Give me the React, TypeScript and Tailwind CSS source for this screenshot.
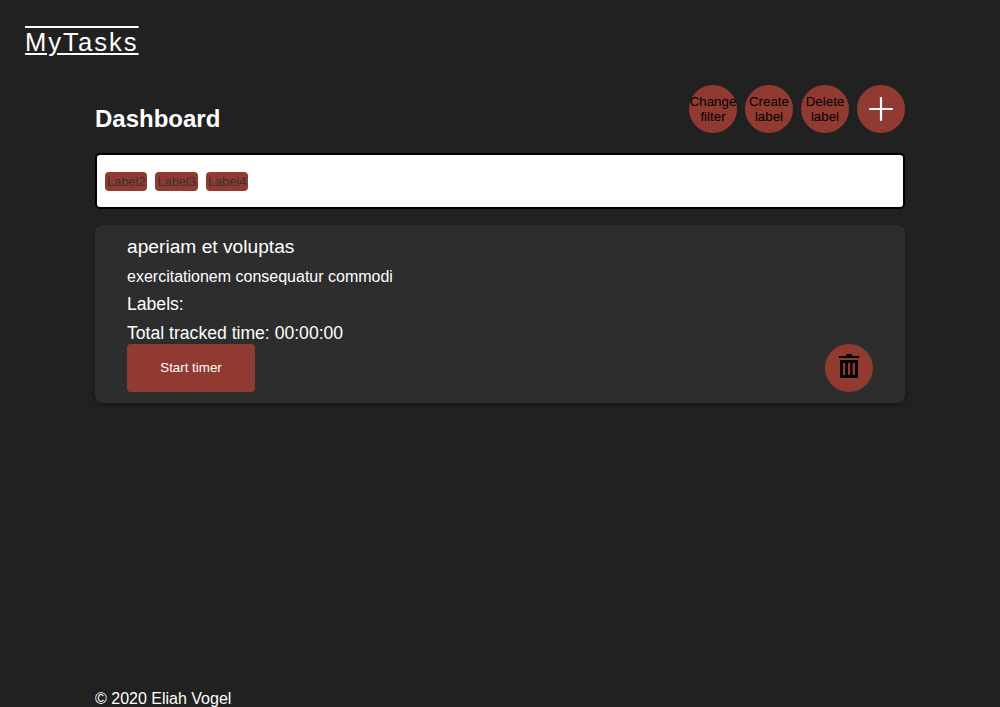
const roundButton =
  "flex h-12 w-12 shrink-0 items-center justify-center rounded-full bg-[#913a31] text-center text-[13.3333px] leading-[15px] text-black";

const actions = ["Change filter", "Create label", "Delete label"];
const labels = ["Label2", "Label3", "Label4"];

function PlusIcon() {
  return (
    <svg width="24" height="24" viewBox="0 0 24 24" fill="#fff">
      <path d="M10.9 0.2h2.2V10.9h10.7v2.2H13.1v10.7h-2.2V13.1H0.2v-2.2h10.7z" />
    </svg>
  );
}

function TrashIcon() {
  return (
    <svg width="20" height="24" viewBox="0 0 20 24" fill="#000">
      <path d="M7 1q0-1 1-1h4q1 0 1 1v1h7v2H0V2h7z" />
      <path
        fillRule="evenodd"
        d="M1 6h18v18H1zM4 9v12h2.3V9zM8.9 9v12h2.2V9zM13.7 9v12H16V9z"
      />
    </svg>
  );
}

export default function App() {
  return (
    <div className="flex h-[707px] flex-col overflow-hidden bg-[#212121] font-['Liberation_Sans',Arial,sans-serif] text-white">
      <header className="h-[85px] pt-[27px] pl-[25px]">
        <a className="block w-fit text-[25.6px] leading-[30px] tracking-[2px] decoration-2 underline-offset-2 [text-decoration-line:underline_overline]">
          MyTasks
        </a>
      </header>
      <main className="mx-auto flex w-[810px] flex-1 flex-col">
        <div className="flex h-12 justify-between">
          <h1 className="pt-5 text-2xl leading-7 font-bold">Dashboard</h1>
          <div className="flex gap-2">
            {actions.map((action) => (
              <button key={action} className={roundButton}>
                <span className="w-12">{action}</span>
              </button>
            ))}
            <button className={roundButton} aria-label="Add task">
              <PlusIcon />
            </button>
          </div>
        </div>
        <div className="mt-5 flex h-14 items-center gap-2 rounded-[5px] border-2 border-black bg-white px-2">
          {labels.map((label) => (
            <span
              key={label}
              className="rounded-[4px] bg-[#913a31] px-0.5 text-[12.8px] leading-[19px] text-[#333]"
            >
              {label}
            </span>
          ))}
        </div>
        <section className="mt-4 h-[178px] rounded-lg bg-[#2d2d2d] px-8 pt-[10px] shadow-[0_2px_4px_rgba(0,0,0,0.3)]">
          <h2 className="h-[30px] text-[19.2px] leading-6">aperiam et voluptas</h2>
          <p className="h-[27px] text-base leading-6">exercitationem consequatur commodi</p>
          <p className="h-[29px] text-[17.6px] leading-6">Labels:</p>
          <p className="h-[23px] text-[17.6px] leading-6">Total tracked time: 00:00:00</p>
          <div className="flex justify-between">
            <button className="h-12 w-32 rounded bg-[#913a31] text-[13.3333px] text-white">
              Start timer
            </button>
            <button className={roundButton} aria-label="Delete task">
              <span className="pb-1">
                <TrashIcon />
              </span>
            </button>
          </div>
        </section>
        <footer className="mt-auto h-[17px] text-base leading-[18px]">© 2020 Eliah Vogel</footer>
      </main>
    </div>
  );
}
